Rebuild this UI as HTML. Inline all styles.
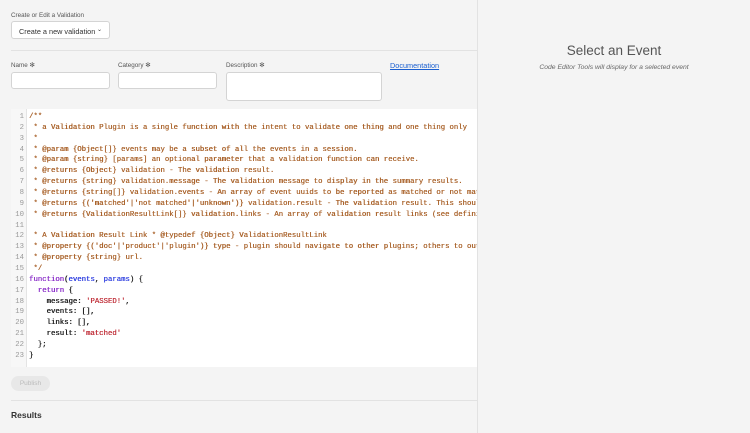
<!DOCTYPE html>
<html><head><style>
*{margin:0;padding:0;box-sizing:border-box}
body{width:750px;height:433px;background:#f4f4f4;font-family:"Liberation Sans",sans-serif;position:relative;overflow:hidden;color:#333}
.abs{position:absolute}
.lbl{font-size:6.3px;color:#555}
.inp{background:#fff;border:1px solid #d4d4d4;border-radius:3px}
.code{left:11px;top:109px;width:466px;height:258px;background:#fff;overflow:hidden}
.gut{position:absolute;left:0;top:0;width:16px;height:100%;background:#f7f7f7;border-right:1px solid #e4e4e4}
pre{font-family:"Liberation Mono",monospace;font-size:7.3px;line-height:10.86px;position:absolute;top:3px;white-space:pre}
.ln{left:0;width:13px;text-align:right;color:#999}
.src{left:18px;color:#222;text-shadow:0.3px 0 0 currentColor}
.c{color:#a9622a}.k{color:#8b2fc9}.v{color:#3040e0}.s{color:#c0303a}
</style></head><body>
<div class="abs lbl" style="left:11px;top:12px">Create or Edit a Validation</div>
<div class="abs inp" style="left:11px;top:21px;width:99px;height:18px;font-size:7.3px;color:#333;padding:5px 0 0 7px;border-radius:3px">Create a new validation<span style="position:absolute;right:7px;top:4px;font-size:6px">&#8964;</span></div>
<div class="abs" style="left:11px;top:50px;width:466px;height:1px;background:#e2e2e2"></div>
<div class="abs lbl" style="left:11px;top:62px">Name ✻</div>
<div class="abs lbl" style="left:118px;top:62px">Category ✻</div>
<div class="abs lbl" style="left:226px;top:62px">Description ✻</div>
<div class="abs" style="left:390px;top:61px;font-size:7.3px;color:#1a5fd0;text-decoration:underline">Documentation</div>
<div class="abs inp" style="left:11px;top:72px;width:99px;height:17px"></div>
<div class="abs inp" style="left:118px;top:72px;width:99px;height:17px"></div>
<div class="abs inp" style="left:226px;top:72px;width:156px;height:29px"></div>
<div class="abs code"><div class="gut"></div>
<pre class="ln">1
2
3
4
5
6
7
8
9
10
11
12
13
14
15
16
17
18
19
20
21
22
23</pre>
<pre class="src"><span class="c">/**
 * a Validation Plugin is a single function with the intent to validate one thing and one thing only
 *
 * @param {Object[]} events may be a subset of all the events in a session.
 * @param {string} [params] an optional parameter that a validation function can receive.
 * @returns {Object} validation - The validation result.
 * @returns {string} validation.message - The validation message to display in the summary results.
 * @returns {string[]} validation.events - An array of event uuids to be reported as matched or not matched
 * @returns {('matched'|'not matched'|'unknown')} validation.result - The validation result. This should
 * @returns {ValidationResultLink[]} validation.links - An array of validation result links (see definition)

 * A Validation Result Link * @typedef {Object} ValidationResultLink
 * @property {('doc'|'product'|'plugin')} type - plugin should navigate to other plugins; others to outside
 * @property {string} url.
 */</span>
<span class="k">function</span>(<span class="v">events</span>, <span class="v">params</span>) {
  <span class="k">return</span> {
    message: <span class="s">'PASSED!'</span>,
    events: [],
    links: [],
    result: <span class="s">'matched'</span>
  };
}</pre></div>
<div class="abs" style="left:11px;top:376px;width:39px;height:15px;border-radius:8px;background:#e8e8e8;color:#bbb;font-size:6.5px;text-align:center;line-height:15px">Publish</div>
<div class="abs" style="left:11px;top:400px;width:466px;height:1px;background:#e2e2e2"></div>
<div class="abs" style="left:11px;top:410px;font-size:8.5px;font-weight:bold;color:#333">Results</div>
<div class="abs" style="left:477px;top:0;width:1px;height:433px;background:#e2e2e2"></div>
<div class="abs" style="left:478px;top:43px;width:272px;text-align:center;font-size:13.5px;color:#555">Select an Event</div>
<div class="abs" style="left:478px;top:64px;width:272px;text-align:center;font-size:6.8px;font-style:italic;color:#666">Code Editor Tools will display for a selected event</div>
</body></html>
